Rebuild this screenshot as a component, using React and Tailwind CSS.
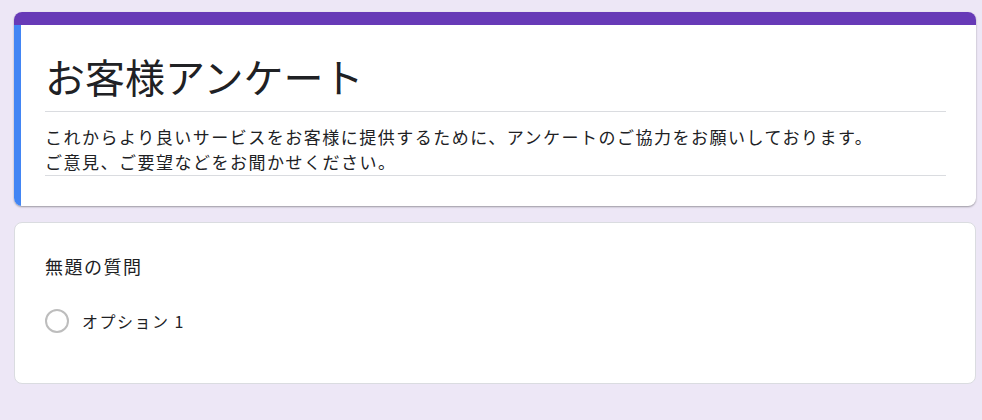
export default function App() {
  const font = { fontFamily: '"Noto Sans CJK JP", "Noto Sans", sans-serif' }
  return (
    <div
      className="min-h-[420px] w-[982px] bg-[#ede7f6] pt-[12px] pl-[14px] pr-[6px] text-[#202124]"
      style={font}
    >
      <div className="rounded-lg bg-white shadow-[0_1px_2px_rgba(0,0,0,0.35)] overflow-hidden">
        <div className="h-[13px] bg-[#673ab7]" />
        <div className="flex">
          <div className="w-[7px] shrink-0 bg-[#4285f4]" />
          <div className="flex-1 pl-[24px] pr-[30px] pt-[27px] pb-[30px]">
            <h1 className="text-[40px] leading-[48px] font-normal border-b border-[#dadce0] pb-[11px]">
              お客様アンケート
            </h1>
            <p className="pt-[12px] text-[17px] leading-[25px] tracking-[1.5px] border-b border-[#dadce0] pb-[1px]">
              これからより良いサービスをお客様に提供するために、アンケートのご協力をお願いしております。
              <br />
              ご意見、ご要望などをお聞かせください。
            </p>
          </div>
        </div>
      </div>

      <div className="mt-[16px] rounded-lg border border-[#dadce0] bg-white pl-[30px] pt-[31px] pb-[50px]">
        <div className="text-[18px] leading-[24px] tracking-[1.5px]">無題の質問</div>
        <div className="mt-[31px] flex items-center gap-[13px]">
          <span className="h-[24px] w-[24px] rounded-full border-2 border-[#bdbdbd]" />
          <span className="text-[16px] leading-[24px] tracking-[1.5px]">オプション 1</span>
        </div>
      </div>
    </div>
  )
}
